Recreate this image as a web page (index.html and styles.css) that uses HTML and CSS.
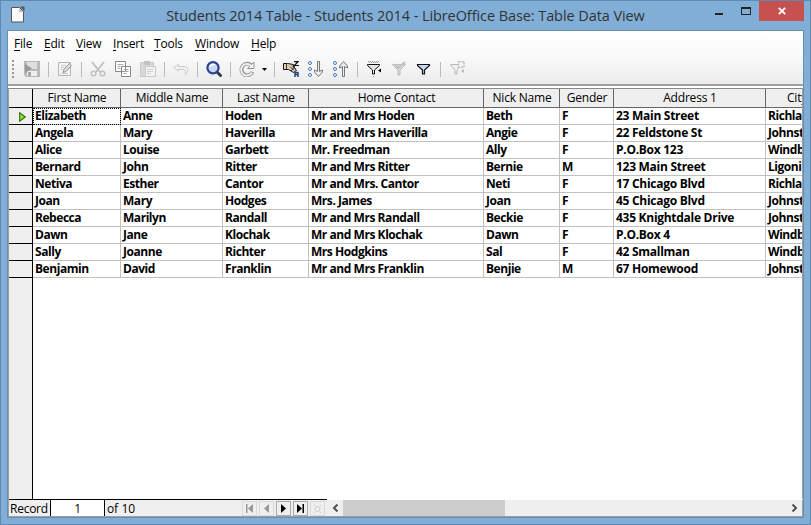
FILE: index.html
```html
<!DOCTYPE html>
<html lang="en">
<head>
<meta charset="utf-8">
<title>Students 2014 Table</title>
<link rel="stylesheet" href="styles.css">
</head>
<body>
<div class="window">
  <header class="titlebar">
    <svg class="doc-icon" width="16" height="18" viewBox="0 0 16 18"><path d="M1.500 1.500h8l4 4v10.500h-12z" fill="#fafafa" stroke="#555"/><path d="M9 2v4h4.500z" fill="#bbb"/><path d="M10 .5h4.500v5z" fill="#555"/></svg>
    <h1 class="title">Students 2014 Table - Students 2014 - LibreOffice Base: Table Data View</h1>
    <div class="controls">
      <span class="minimize"></span><span class="maximize"></span>
      <span class="close"><svg width="8" height="8" viewBox="0 0 8 8"><path d="M.8.8l6.400 6.400M7.200.8L.8 7.200" stroke="#fff" stroke-width="1.800"/></svg></span>
    </div>
  </header>
  <main class="client">
    <nav class="menu">
      <span><u>F</u>ile</span><span><u>E</u>dit</span><span><u>V</u>iew</span><span><u>I</u>nsert</span><span><u>T</u>ools</span><span><u>W</u>indow</span><span><u>H</u>elp</span>
    </nav>
    <div class="toolbar">
      <i class="grip"></i>
      <span class="tool"><svg viewBox="0 0 16 16"><path d="M0 0h16v16H2l-2-2z" fill="#b9b9b9"/><path d="M3 1h10v7H3z" fill="#dedede"/><path d="M3 10h10v5H3z" fill="#efefef"/><path d="M4 11h3v4H4z" fill="#a5a5a5"/><path d="M1 3l7 4.500L1 12z" fill="#999"/></svg></span>
      <i class="sep"></i>
      <span class="tool"><svg viewBox="0 0 16 16" fill="none"><path d="M1.500 1.500h12v13h-12z" fill="#f3f3f3" stroke="#b5b5b5"/><path d="M4 4.500h5M4 6.500h4M4 8.500h2M4 12.500h7" stroke="#ccc"/><path d="M6 11.500l1-3 5.500-6 2 2-5.500 6z" fill="#e0e0e0" stroke="#949494"/></svg></span>
      <i class="sep"></i>
      <span class="tool"><svg viewBox="0 0 16 16" fill="none" stroke="#c2c2c2"><path d="M2 1l8 10M14 1L6 11" stroke-width="2"/><circle cx="3.500" cy="12.500" r="2.300" stroke-width="1.500"/><circle cx="12.500" cy="12.500" r="2.300" stroke-width="1.500"/></svg></span>
      <span class="tool"><svg viewBox="0 0 16 16"><path d="M.5.5h10v10H.5zM6.500 5.500h9v10h-9z" fill="#fff" stroke="#888"/><path d="M2.500 3.500h6M2.500 5.500h3M2.500 7.500h3M8.500 8.500h5M8.500 10.500h5M8.500 12.500h3" stroke="#aaa"/></svg></span>
      <span class="tool"><svg viewBox="0 0 16 16"><path d="M.5 1.500h13v14H.5z" fill="#d9d9d9" stroke="#c8c8c8"/><path d="M4 0h6v4H4z" fill="#c2c2c2"/><path d="M5.500 5.500h10v10h-10z" fill="#f3f3f3" stroke="#c9c9c9"/><path d="M7 8.500h6M7 10.500h6M7 12.500h4" stroke="#d0d0d0"/></svg></span>
      <i class="sep"></i>
      <span class="tool"><svg viewBox="0 0 16 16"><path d="M.7 6.500L5.500 3v2.500H11c3 0 4.500 2 3.500 5l-2 3c.5-3 0-4.500-2-5h-5V10z" fill="#f2f2f2" stroke="#ccc"/></svg></span>
      <i class="sep"></i>
      <span class="tool"><svg viewBox="0 0 16 16" fill="none"><path d="M11 11l3.500 3.500" stroke="#333850" stroke-width="3" stroke-linecap="round"/><circle cx="7" cy="6.800" r="5.600" fill="#c8d8f0" stroke="#2c418f" stroke-width="2.200"/><path d="M4 6c1-3 3-3 5-2" stroke="#fff" stroke-width="1.500"/></svg></span>
      <i class="sep"></i>
      <span class="tool"><svg viewBox="0 0 16 16" fill="none"><path d="M12.500 4.500a5.800 5.800 0 1 0 1 6.500" stroke="#949494" stroke-width="3.800"/><path d="M8.500 7.500h6.500V1z" fill="#f4f4f4" stroke="#949494"/><path d="M12.200 4.800a5.800 5.800 0 1 0 .8 6.700" stroke="#f4f4f4" stroke-width="1.800"/></svg></span>
      <span class="drop"><svg viewBox="0 0 5 3"><path d="M0 0h5L2.500 3z" fill="#000"/></svg></span>
      <i class="sep"></i>
      <span class="tool"><svg viewBox="0 0 16 16" fill="none"><path d="M.5 2.500h4l6 1v2l3 4-3 2-5-3h-5z" fill="#e2d2b8" stroke="#111"/><path d="M3.500 3v5M7 5.500l4 4M9 4.500l3.500 3.500M8 10l4-5" stroke="#222" stroke-width=".9"/><path d="M11 .6h4L11.500 4.500H16" stroke="#111" stroke-width="1.200"/><path d="M12 16v-4.500h3V16M12 13.500h3" stroke="#23457d" stroke-width="1.500"/></svg></span>
      <span class="tool"><svg viewBox="0 0 16 16" fill="#fff"><g stroke="#4779b8"><circle cx="2" cy="2" r="1.500"/><circle cx="2" cy="8" r="1.500"/><circle cx="2" cy="14" r="1.500"/></g><path d="M9.500.5h2v10l3-1.500v2L10.500 15.500 6.500 11V9l3 1.500z" fill="#eee" stroke="#777"/></svg></span>
      <span class="tool"><svg viewBox="0 0 16 16" fill="#fff"><g stroke="#4779b8"><circle cx="2" cy="2" r="1.500"/><circle cx="2" cy="8" r="1.500"/><circle cx="2" cy="14" r="1.500"/></g><path d="M9.500 15.500h2v-10l3 1.500V5L10.500.5 6.500 5v2l3-1.500z" fill="#eee" stroke="#777"/></svg></span>
      <i class="sep"></i>
      <span class="tool"><svg viewBox="0 0 16 16"><path d="M2 .5h11M3 1.500h10" stroke="#999" stroke-dasharray="1 1"/><path d="M1.500 3.500h12v1L8.500 9v4H6.500V9l-5-4.500z" fill="#e5e5e5" stroke="#111"/><path d="M12 9.500l3-2v4z"/><path d="M7 15h1v1H7z" fill="#999"/></svg></span>
      <span class="tool"><svg viewBox="0 0 16 16"><path d="M1.500 3.500h13L9 9v5H7V9z" fill="#ddd" stroke="#bbb"/><path d="M4 3l3 4 7-6" fill="none" stroke="#c0c0c0" stroke-width="2"/></svg></span>
      <span class="tool"><svg viewBox="0 0 16 16"><path d="M1.500 3.500h12v1L8.500 9v4H6.500V9l-5-4.500z" fill="#c6d9ee" stroke="#111" stroke-width="1.200"/></svg></span>
      <i class="sep"></i>
      <span class="tool"><svg viewBox="0 0 16 16" fill="none"><path d="M9 3.500H1.500V4L6 9v4h2V9l2-2" fill="#eee" stroke="#bbb"/><rect x="9.500" y=".7" width="5.500" height="5.500" stroke="#bbb" stroke-width="1.400" stroke-dasharray="2 1"/><path d="M12 10l3-2v4z" fill="#bbb"/></svg></span>
    </div>
    <table class="grid">
      <colgroup><col class="c0"><col class="c1"><col class="c2"><col class="c3"><col class="c4"><col class="c5"><col class="c6"><col class="c7"><col class="c8"></colgroup>
      <thead><tr><th></th><th>First Name</th><th>Middle Name</th><th>Last Name</th><th>Home Contact</th><th>Nick Name</th><th>Gender</th><th>Address 1</th><th class="city">City</th></tr></thead>
      <tbody>
        <tr><th><svg class="current" width="7" height="10" viewBox="0 0 7 10"><path d="M.7.8v8.400L6.200 5z" fill="#9be031" stroke="#2f7d0c" stroke-width="1.200"/></svg></th><td class="focus">Elizabeth</td><td>Anne</td><td>Hoden</td><td>Mr and Mrs Hoden</td><td>Beth</td><td>F</td><td class="address">23 Main Street</td><td>Richland</td></tr>
        <tr><th></th><td>Angela</td><td>Mary</td><td>Haverilla</td><td>Mr and Mrs Haverilla</td><td>Angie</td><td>F</td><td class="address">22 Feldstone St</td><td>Johnstown</td></tr>
        <tr><th></th><td>Alice</td><td>Louise</td><td>Garbett</td><td>Mr. Freedman</td><td>Ally</td><td>F</td><td class="address">P.O.Box 123</td><td>Windber</td></tr>
        <tr><th></th><td>Bernard</td><td>John</td><td>Ritter</td><td>Mr and Mrs Ritter</td><td>Bernie</td><td>M</td><td class="address">123 Main Street</td><td>Ligonier</td></tr>
        <tr><th></th><td>Netiva</td><td>Esther</td><td>Cantor</td><td>Mr and Mrs. Cantor</td><td>Neti</td><td>F</td><td class="address">17 Chicago Blvd</td><td>Richland</td></tr>
        <tr><th></th><td>Joan</td><td>Mary</td><td>Hodges</td><td>Mrs. James</td><td>Joan</td><td>F</td><td class="address">45 Chicago Blvd</td><td>Johnstown</td></tr>
        <tr><th></th><td>Rebecca</td><td>Marilyn</td><td>Randall</td><td>Mr and Mrs Randall</td><td>Beckie</td><td>F</td><td class="address">435 Knightdale Drive</td><td>Johnstown</td></tr>
        <tr><th></th><td>Dawn</td><td>Jane</td><td>Klochak</td><td>Mr and Mrs Klochak</td><td>Dawn</td><td>F</td><td class="address">P.O.Box 4</td><td>Windber</td></tr>
        <tr><th></th><td>Sally</td><td>Joanne</td><td>Richter</td><td>Mrs Hodgkins</td><td>Sal</td><td>F</td><td class="address">42 Smallman</td><td>Windber</td></tr>
        <tr><th></th><td>Benjamin</td><td>David</td><td>Franklin</td><td>Mr and Mrs Franklin</td><td>Benjie</td><td>M</td><td class="address">67 Homewood</td><td>Johnstown</td></tr>
      </tbody>
    </table>
    <div class="blank"></div>
    <footer class="status">
      <div class="record"><span class="label">Record</span><span class="number">1</span><span class="total">of 10</span>
        <div class="navs">
          <b><svg viewBox="0 0 9 9"><path d="M1 0h1.500v9H1zM8 0v9L3 4.500z" fill="#999"/></svg></b>
          <b><svg viewBox="0 0 9 9"><path d="M7 0v9L2 4.500z" fill="#999"/></svg></b>
          <b class="on"><svg viewBox="0 0 9 9"><path d="M2 0v9l5-4.500z"/></svg></b>
          <b class="on"><svg viewBox="0 0 9 9"><path d="M6.500 0H8v9H6.500zM1 0v9l5-4.500z"/></svg></b>
          <b><svg viewBox="0 0 9 9"><circle cx="4.500" cy="5" r="2.500" fill="none" stroke="#ccc"/><path d="M1 1l1 1M8 1L7 2M1 9l1-1M8 9L7 8" stroke="#ccc"/></svg></b>
        </div>
      </div>
      <div class="scroll">
        <svg width="7" height="8" viewBox="0 0 7 8"><path d="M5.500.5L2 4l3.500 3.500" fill="none" stroke="#505050" stroke-width="2"/></svg>
        <i class="thumb"></i>
        <svg width="7" height="8" viewBox="0 0 7 8"><path d="M1.500.5L5 4 1.500 7.500" fill="none" stroke="#505050" stroke-width="2"/></svg>
      </div>
    </footer>
  </main>
</div>
</body>
</html>
```
FILE: styles.css
```css
* { box-sizing: border-box; }
body { margin: 0; font: 12px/17px "Open Sans", sans-serif; color: #000; }
svg { display: block; flex: none; }
.window { width: 811px; height: 525px; background: #80aed6; border: 1px solid #5f89ae; padding: 0 6px 6px; display: flex; flex-direction: column; }
.titlebar { height: 29px; display: flex; position: relative; flex: none; }
.doc-icon { margin: 5px 0 0 3px; }
.title { position: absolute; left: 0; right: 0; top: 5px; margin: 0; text-align: center; font-size: 14.500px; line-height: 20px; font-weight: 400; letter-spacing: -.08px; color: #333; white-space: nowrap; }
.controls { margin-left: auto; display: flex; }
.minimize { width: 8px; height: 2px; background: #222; margin: 12px 18px 0 0; }
.maximize { width: 10px; height: 8px; border: 1px solid #222; border-top-width: 2px; margin: 6px 8px 0 0; }
.close { width: 45px; height: 20px; background: #c75050; display: grid; place-items: center; }
.client { flex: 1; border: 1px solid #668fae; background: #fff; display: flex; flex-direction: column; overflow: hidden; }
.menu { height: 25px; background: linear-gradient(#fff, #fafafa); display: grid; grid-template-columns: 30px 32px 37px 41px 41px 56px 60px; padding: 4px 0 0 6px; letter-spacing: -.2px; flex: none; }
.menu u { text-underline-offset: 2px; text-decoration-skip-ink: none; }
.toolbar { height: 30px; background: linear-gradient(#fafafa, #ececec); border-bottom: 2px solid #a0a0a0; display: flex; align-items: center; padding: 0 0 2px 4px; flex: none; }
.grip { width: 2px; height: 18px; margin-right: 6px; background: repeating-linear-gradient(#999 0 2px, transparent 2px 4px); }
.tool { width: 25px; padding-left: 4px; flex: none; }
.tool svg { width: 16px; height: 16px; }
.sep { width: 8px; height: 15px; border-left: 1px solid #bbb; margin-left: 3px; margin-right: -3px; }
.drop { width: 11px; padding-left: 2px; }
.drop svg { width: 5px; height: 3px; }
.grid { margin-top: 2px; table-layout: fixed; border-collapse: separate; border-spacing: 0; width: 795px; border-top: 1px solid #888; border-left: 1px solid #a0a0a0; border-right: 1px solid #a0a0a0; flex: none; }
.c0 { width: 24px; } .c1 { width: 88px; } .c2 { width: 102px; } .c3 { width: 86px; } .c4 { width: 175px; } .c5 { width: 76px; } .c6 { width: 54px; } .c7 { width: 152px; } .c8 { width: 36px; }
.grid th, .grid td { padding: 0 0 0 2px; height: 17px; line-height: 16px; border-right: 1px solid #c0c0c0; border-bottom: 1px solid #c0c0c0; white-space: nowrap; overflow: hidden; text-align: left; }
.grid td { font-weight: 700; letter-spacing: -.45px; }
.grid td.address { letter-spacing: -.28px; }
.grid thead th { height: 19px; line-height: 18px; text-align: center; font-weight: 400; letter-spacing: -.2px; background: #efefef; border-color: #666; padding: 0 0 0 1px; }
.grid thead th.city { text-align: left; padding-left: 21px; }
.grid tr > :last-child { border-right: 0; }
.grid th:first-child { background: #efefef; border-right: 1px solid #000; border-bottom-color: #000; }
.current { margin: 2px 0 0 8px; }
.grid td.focus { outline: 1px dotted #000; outline-offset: -1px; }
.blank { flex: 1; border-left: 1px solid #a0a0a0; border-right: 1px solid #a0a0a0; background: linear-gradient(90deg, #efefef 23px, #000 23px 24px, #fff 24px); }
.status { height: 18px; display: flex; border-bottom: 1px solid #a0a0a0; border-left: 1px solid #a0a0a0; flex: none; }
.record { width: 318px; border-top: 1px solid #000; background: #efefef; display: flex; line-height: 17px; letter-spacing: -.25px; flex: none; }
.label { width: 41px; padding-left: 1px; }
.number { width: 55px; border: solid #000; border-width: 0 1px; background: #fff; text-align: center; }
.total { padding-left: 2px; word-spacing: 1px; }
.navs { margin-left: auto; display: flex; gap: 2px; padding: 1px 2px 0 0; }
.navs b { width: 15px; height: 15px; border: 1px solid #dadada; display: grid; place-items: center; }
.navs .on { border-color: #aaa; }
.navs svg { width: 9px; height: 9px; }
.scroll { flex: 1; margin-top: 1px; background: #efefef; border-right: 1px solid #a0a0a0; display: flex; align-items: center; padding: 0 4px 0 5px; }
.scroll > svg:last-child { margin-left: auto; }
.thumb { width: 162px; height: 16px; background: #cdcdcd; margin-left: 4px; }
```
